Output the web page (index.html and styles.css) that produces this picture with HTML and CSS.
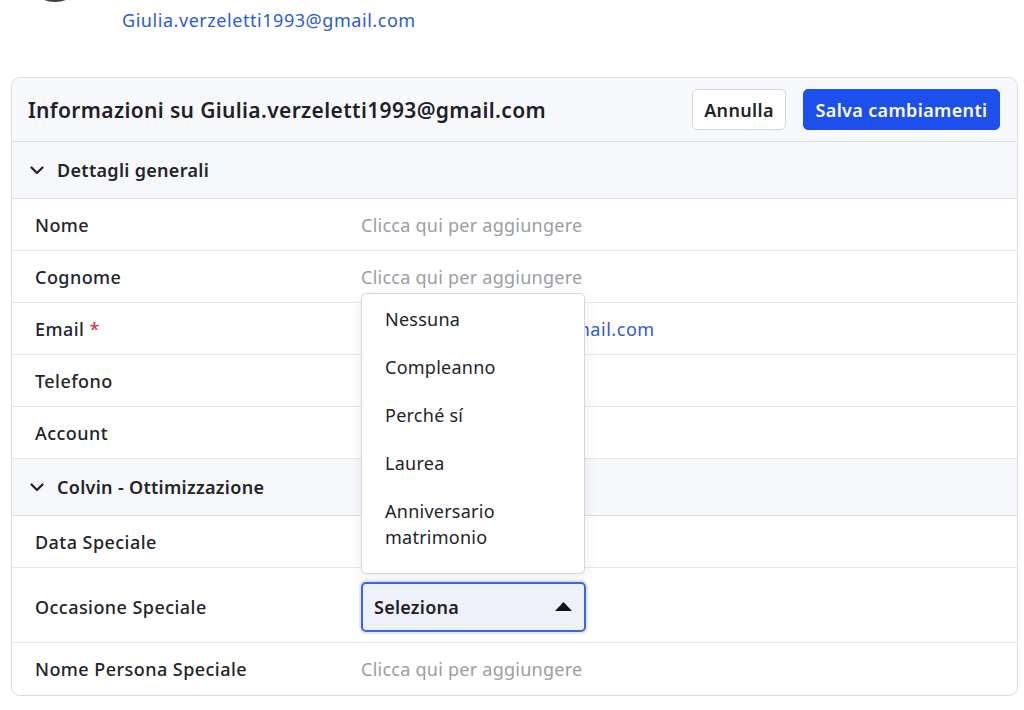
FILE: index.html
```html
<!DOCTYPE html>
<html lang="it">
<head>
<meta charset="utf-8">
<title>Contatto</title>
<link rel="stylesheet" href="styles.css">
</head>
<body>
  <div class="profile">
    <div class="avatar"></div>
    <div class="profile-info">
      <a class="profile-email" href="#">Giulia.verzeletti1993@gmail.com</a>
    </div>
  </div>

  <section class="card">
    <header class="card-head">
      <h1 class="card-title">Informazioni su Giulia.verzeletti1993@gmail.com</h1>
      <div class="actions">
        <button class="btn btn-ghost">Annulla</button>
        <button class="btn btn-primary">Salva cambiamenti</button>
      </div>
    </header>

    <div class="group-head">
      <svg class="chev" width="14" height="9" viewBox="0 0 14 9"><path d="M1.5 1.5 7 7l5.5-5.5" fill="none" stroke="#222" stroke-width="2.2" stroke-linecap="round" stroke-linejoin="round"/></svg>
      <span>Dettagli generali</span>
    </div>
    <div class="row"><span class="label">Nome</span><span class="value placeholder">Clicca qui per aggiungere</span></div>
    <div class="row"><span class="label">Cognome</span><span class="value placeholder">Clicca qui per aggiungere</span></div>
    <div class="row"><span class="label">Email <span class="req">*</span></span><span class="value link">Giulia.verzeletti1993@gmail.com</span></div>
    <div class="row"><span class="label">Telefono</span><span class="value"></span></div>
    <div class="row"><span class="label">Account</span><span class="value"></span></div>

    <div class="group-head">
      <svg class="chev" width="14" height="9" viewBox="0 0 14 9"><path d="M1.5 1.5 7 7l5.5-5.5" fill="none" stroke="#222" stroke-width="2.2" stroke-linecap="round" stroke-linejoin="round"/></svg>
      <span>Colvin - Ottimizzazione</span>
    </div>
    <div class="row"><span class="label">Data Speciale</span><span class="value"></span></div>
    <div class="row row-select">
      <span class="label">Occasione Speciale</span>
      <div class="select-wrap">
        <ul class="menu">
          <li>Nessuna</li>
          <li>Compleanno</li>
          <li>Perché sí</li>
          <li>Laurea</li>
          <li>Anniversario matrimonio</li>
        </ul>
        <div class="select">
          <span>Seleziona</span>
          <svg width="17" height="9" viewBox="0 0 17 9"><path d="M0 9 8.5 0 17 9z" fill="#111"/></svg>
        </div>
      </div>
    </div>
    <div class="row row-last"><span class="label">Nome Persona Speciale</span><span class="value placeholder">Clicca qui per aggiungere</span></div>
  </section>
</body>
</html>
```

FILE: styles.css
```css
* { box-sizing: border-box; }

html, body {
  margin: 0;
  padding: 0;
  background: #ffffff;
  overflow: hidden;
}

body {
  font-family: "Noto Sans", "Open Sans", sans-serif;
  color: #22242a;
  font-size: 18px;
  letter-spacing: 0.25px;
}

/* profile strip, scrolled mostly out of view */
.profile {
  display: flex;
  align-items: flex-start;
  margin-top: -60px;
  padding-left: 24px;
  height: 137px;
}

.avatar {
  width: 62px;
  height: 62px;
  border-radius: 50%;
  background: #3b3c40;
  flex: none;
}

.profile-info {
  display: flex;
  flex-direction: column;
  margin-left: 36px;
  padding-top: 68px;
}

.profile-email {
  color: #2c5bd6;
  text-decoration: none;
  font-size: 18px;
  line-height: 24px;
  letter-spacing: 0.55px;
}

/* card */
.card {
  margin: 0 6px 0 11px;
  border: 1px solid #d9dce2;
  border-radius: 9px;
  background: #fff;
}

.card-head {
  display: flex;
  align-items: center;
  justify-content: space-between;
  height: 64px;
  padding: 0 17px 0 16px;
  background: #f8f9fc;
  border-bottom: 1px solid #dcdfe5;
  border-radius: 9px 9px 0 0;
}

.card-title {
  margin: 0;
  font-size: 21px;
  font-weight: 600;
  letter-spacing: 0.35px;
  color: #1f2126;
}

.actions {
  display: flex;
  gap: 17px;
}

.btn {
  height: 41px;
  border-radius: 5px;
  font-family: inherit;
  font-size: 18px;
  font-weight: 600;
  letter-spacing: 0.35px;
  padding: 0 8px;
  cursor: pointer;
}

.btn-ghost {
  width: 94px;
  background: #fff;
  border: 1px solid #d3d6dd;
  color: #22242a;
}

.btn-primary {
  width: 197px;
  background: #1c4fec;
  border: 1px solid #1c4fec;
  color: #fff;
}

.group-head {
  display: flex;
  align-items: center;
  gap: 13px;
  height: 57px;
  padding-left: 18px;
  background: #f7f8fb;
  border-bottom: 1px solid #dcdfe5;
  font-weight: 600;
  font-size: 18px;
  letter-spacing: 0.3px;
}

.chev { flex: none; }

.row {
  display: grid;
  grid-template-columns: 326px 1fr;
  align-items: center;
  height: 52px;
  padding-left: 23px;
  border-bottom: 1px solid #e6e8ec;
}

.row-last { border-bottom: 0; }

.label {
  font-weight: 500;
  letter-spacing: 0.45px;
  color: #22242a;
}

.req { color: #d2335f; }

.value { color: #22242a; }
.placeholder { color: #9b9da4; }
.link { color: #2c5bd6; letter-spacing: 0.55px; }

.row-select {
  height: 75px;
  padding-top: 3px;
}

.select-wrap {
  position: relative;
  width: 225px;
}

.select {
  display: flex;
  align-items: center;
  justify-content: space-between;
  height: 50px;
  padding: 0 12px 0 11px;
  background: #eef0fa;
  border: 2px solid #3f65dc;
  border-radius: 5px;
  box-shadow: 0 0 0 2px rgba(70, 110, 230, 0.15);
  font-weight: 600;
  color: #1f2126;
}

/* open option list above the select */
.menu {
  position: absolute;
  left: 0;
  bottom: calc(100% + 8px);
  width: 224px;
  margin: 0;
  padding: 1px 0 12px;
  list-style: none;
  background: #fff;
  border: 1px solid #d4d7de;
  border-radius: 5px;
  box-shadow: 0 4px 14px rgba(20, 30, 60, 0.08);
  z-index: 2;
}

.menu li {
  padding: 11px 23px;
  line-height: 26px;
  color: #22242a;
}
```
